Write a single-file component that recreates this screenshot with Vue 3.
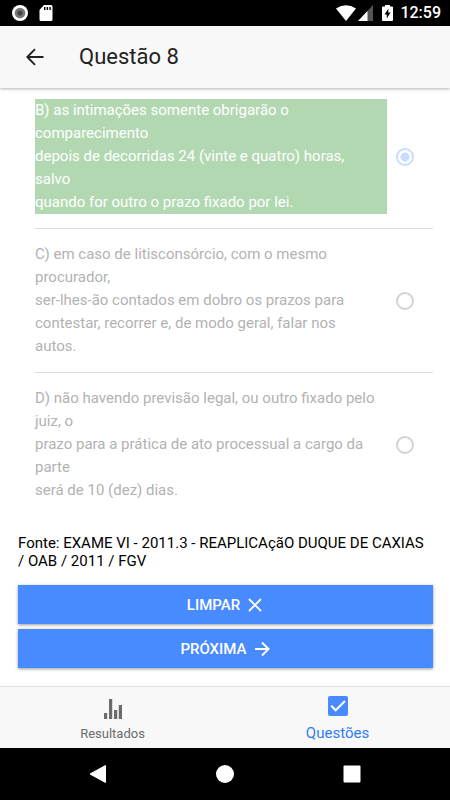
<script setup>
import { ref } from 'vue'

const selected = ref('B')
const options = [
  { id: 'B', correct: true, text: 'B) as intimações somente obrigarão o comparecimento\ndepois de decorridas 24 (vinte e quatro) horas, salvo\nquando for outro o prazo fixado por lei.' },
  { id: 'C', correct: false, text: 'C) em caso de litisconsórcio, com o mesmo procurador,\nser-lhes-ão contados em dobro os prazos para contestar, recorrer e, de modo geral, falar nos autos.' },
  { id: 'D', correct: false, text: 'D) não havendo previsão legal, ou outro fixado pelo juiz, o\nprazo para a prática de ato processual a cargo da parte\nserá de 10 (dez) dias.' }
]
</script>

<template>
  <div class="screen">
    <div class="status">
      <svg width="16" height="16" viewBox="0 0 16 16" aria-hidden="true">
        <circle cx="8" cy="8" r="8" fill="#fff" />
        <circle cx="8" cy="8" r="5.3" fill="#777" />
        <circle cx="8" cy="8" r="2.6" fill="#444" />
      </svg>
      <svg width="14" height="16" viewBox="0 0 14 16" aria-hidden="true">
        <path d="M5 0h7q1.500 0 1.500 1.500v13q0 1.500-1.500 1.500H2q-1.500 0-1.500-1.500V5z" fill="#fff" />
        <path d="M5 2h1.400v3H5zM7.700 2h1.400v3H7.700zM10.400 2h1.400v3h-1.400z" fill="#000" />
      </svg>
      <div class="status-right">
        <svg width="20" height="16" viewBox="0 0 20 16" aria-hidden="true">
          <path d="M0 3.500Q10-3 20 3.500L10 16z" fill="#fff" />
        </svg>
        <svg class="signal" width="15" height="16" viewBox="0 0 15 16" aria-hidden="true">
          <path d="M15 0v16H0z" fill="#555" />
          <path d="M9.500 6v10H0z" fill="#fff" />
        </svg>
        <svg class="battery" width="11" height="16" viewBox="0 0 11 16" aria-hidden="true">
          <path d="M3 0h5v1.500h2q1 0 1 1V15q0 1-1 1H1q-1 0-1-1V2.500q0-1 1-1h2z" fill="#fff" />
          <path d="M6.500 3.500L2.500 9.500h2.300v4L8.500 7.500H6.200z" fill="#000" />
        </svg>
        <span class="clock">12:59</span>
      </div>
    </div>

    <header class="toolbar">
      <button class="back" type="button" aria-label="Voltar">
        <svg width="18" height="18" viewBox="0 0 18 18" aria-hidden="true">
          <path d="M17.500 9H1.500M9 1.200L1.300 9L9 16.800" fill="none" stroke="#222" stroke-width="1.900" />
        </svg>
      </button>
      <h1>Questão 8</h1>
    </header>

    <main class="content">
      <div class="options">
        <label v-for="option in options" :key="option.id" class="option">
          <span class="option-text" :class="{ correct: option.correct }">{{ option.text }}</span>
          <input v-model="selected" class="radio" type="radio" name="resposta" :value="option.id" disabled />
        </label>
      </div>

      <p class="source">Fonte: EXAME VI - 2011.3 - REAPLICAçãO DUQUE DE CAXIAS / OAB / 2011 / FGV</p>

      <div class="actions">
        <button class="action" type="button">
          LIMPAR
          <svg width="18" height="18" viewBox="0 0 18 18" aria-hidden="true">
            <path d="M3 3L15 15M15 3L3 15" fill="none" stroke="#fff" stroke-width="1.900" />
          </svg>
        </button>
        <button class="action" type="button">
          PRÓXIMA
          <svg width="18" height="18" viewBox="0 0 18 18" aria-hidden="true">
            <path d="M2 9H15.500M9 2.500L15.500 9L9 15.500" fill="none" stroke="#fff" stroke-width="1.900" />
          </svg>
        </button>
      </div>
    </main>

    <nav class="tabs">
      <a class="tab" href="#resultados">
        <svg width="18" height="20" viewBox="0 0 18 20" aria-hidden="true">
          <path d="M0 14h3.200v6H0zM5 0h3.200v20H5zM10 11h3.200v9H10zM14.800 6H18v14h-3.200z" fill="#6c6c6c" />
        </svg>
        <span>Resultados</span>
      </a>
      <a class="tab active" href="#questoes" aria-current="page">
        <svg width="20" height="20" viewBox="0 0 20 20" aria-hidden="true">
          <rect width="20" height="20" rx="2" fill="#488aff" />
          <path d="M3.200 9.700L7.700 14.300L17 5" fill="none" stroke="#fff" stroke-width="2" />
        </svg>
        <span>Questões</span>
      </a>
    </nav>

    <div class="system">
      <button type="button" aria-label="Voltar">
        <svg width="18" height="18" viewBox="0 0 18 18" aria-hidden="true"><path d="M16.500 0.500v17L1 9z" fill="#fff" stroke="#fff" stroke-linejoin="round" /></svg>
      </button>
      <button type="button" aria-label="Início">
        <svg width="18" height="18" viewBox="0 0 18 18" aria-hidden="true"><circle cx="9" cy="9" r="9" fill="#fff" /></svg>
      </button>
      <button type="button" aria-label="Recentes">
        <svg width="18" height="18" viewBox="0 0 18 18" aria-hidden="true"><rect x="0.500" y="0.500" width="17" height="17" rx="1" fill="#fff" /></svg>
      </button>
    </div>
  </div>
</template>

<style>
body {
  margin: 0;
  background: #fff;
}
</style>

<style scoped>
.screen {
  display: flex;
  flex-direction: column;
  min-height: 100vh;
  font-family: Roboto, "Liberation Sans", sans-serif;
  color: #000;
}
svg {
  display: block;
  flex: none;
}
button {
  margin: 0;
  padding: 0;
  border: 0;
  background: none;
  font-family: inherit;
}
.status {
  display: flex;
  align-items: center;
  gap: 11px;
  height: 26px;
  padding: 0 9px 0 12px;
  background: #000;
}
.status-right {
  display: flex;
  align-items: center;
  margin-left: auto;
}
.status-right svg:first-child {
  margin-right: 2px;
}
.battery {
  margin: 0 7px 0 9px;
}
.clock {
  color: #fff;
  font-size: 16px;
  font-weight: 500;
  line-height: 28px;
}
.toolbar {
  position: relative;
  display: flex;
  align-items: center;
  gap: 35px;
  height: 62px;
  padding: 0 26px;
  background: #f8f8f8;
  box-shadow: 0 1px 3px rgba(0, 0, 0, 0.3);
}
h1 {
  margin: 0;
  font-size: 22px;
  font-weight: 400;
  line-height: 28px;
  color: #222;
}
.content {
  flex: 1;
  padding: 11px 17px 17px 18px;
}
.options {
  padding-left: 17px;
}
.option {
  display: flex;
  align-items: center;
  gap: 9px;
  padding: 14px 19px 14px 0;
  border-bottom: 1px solid #dedede;
}
.option:first-child {
  padding-top: 0;
}
.option:last-child {
  border-bottom: 0;
}
.option-text {
  flex: 1;
  padding-right: 9px;
  font-size: 15px;
  line-height: 23px;
  color: #b2b2b2;
  white-space: pre-line;
}
.correct {
  background: #b2d8b2;
  color: #fff;
}
.radio {
  appearance: none;
  box-sizing: border-box;
  flex: none;
  width: 18px;
  height: 18px;
  margin: 0;
  border: 2px solid #d3d3d3;
  border-radius: 50%;
}
.radio:checked {
  border-color: #c8dcff;
  background: radial-gradient(circle, #c8dcff 4px, #fff 5px);
}
.source {
  margin: 18px 0 15px;
  font-size: 15px;
  line-height: 18px;
}
.actions {
  display: flex;
  flex-direction: column;
  gap: 5px;
}
.action {
  display: flex;
  align-items: center;
  justify-content: center;
  gap: 6px;
  height: 39px;
  background: #488aff;
  box-shadow: 0 1px 3px rgba(0, 0, 0, 0.4);
  color: #fff;
  font-size: 15px;
  font-weight: 500;
}
.tabs {
  display: flex;
  height: 61px;
  border-top: 1px solid #e0e0e0;
  background: #f8f8f8;
}
.tab {
  flex: 1;
  display: flex;
  flex-direction: column;
  align-items: center;
  justify-content: flex-end;
  gap: 6px;
  padding-bottom: 5px;
  color: #6c6c6c;
  font-size: 13px;
  line-height: 18px;
  text-decoration: none;
}
.active {
  gap: 8px;
  padding-bottom: 6px;
  color: #2f7df6;
  font-size: 15px;
}
.system {
  display: flex;
  align-items: center;
  justify-content: center;
  gap: 109px;
  height: 52px;
  background: #000;
}
</style>
